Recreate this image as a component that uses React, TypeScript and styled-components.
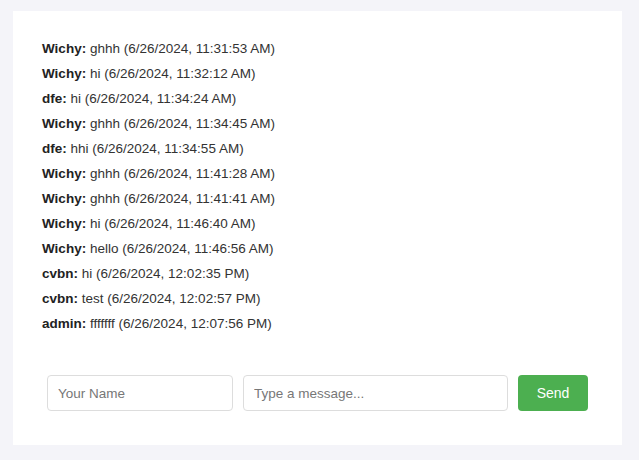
import styled, { createGlobalStyle } from 'styled-components';

const messages = [
  { user: 'Wichy', text: 'ghhh', time: '6/26/2024, 11:31:53 AM' },
  { user: 'Wichy', text: 'hi', time: '6/26/2024, 11:32:12 AM' },
  { user: 'dfe', text: 'hi', time: '6/26/2024, 11:34:24 AM' },
  { user: 'Wichy', text: 'ghhh', time: '6/26/2024, 11:34:45 AM' },
  { user: 'dfe', text: 'hhi', time: '6/26/2024, 11:34:55 AM' },
  { user: 'Wichy', text: 'ghhh', time: '6/26/2024, 11:41:28 AM' },
  { user: 'Wichy', text: 'ghhh', time: '6/26/2024, 11:41:41 AM' },
  { user: 'Wichy', text: 'hi', time: '6/26/2024, 11:46:40 AM' },
  { user: 'Wichy', text: 'hello', time: '6/26/2024, 11:46:56 AM' },
  { user: 'cvbn', text: 'hi', time: '6/26/2024, 12:02:35 PM' },
  { user: 'cvbn', text: 'test', time: '6/26/2024, 12:02:57 PM' },
  { user: 'admin', text: 'fffffff', time: '6/26/2024, 12:07:56 PM' },
];

const GlobalStyle = createGlobalStyle`
  html, body {
    margin: 0;
    padding: 0;
    background: #f4f4f9;
    font-family: "Liberation Sans", Arial, sans-serif;
  }
`;

const Page = styled.div`
  padding: 11px 17px 15px 13px;
`;

const ChatBox = styled.div`
  background: #fff;
  width: 609px;
  height: 434px;
  box-sizing: border-box;
  padding: 25px 34px 34px 29px;
  display: flex;
  flex-direction: column;
`;

const MessageList = styled.div`
  flex: 1;
  display: flex;
  flex-direction: column;
`;

const Message = styled.div`
  font-size: 13.5px;
  line-height: 25px;
  color: #333;
`;

const User = styled.strong`
  color: #222;
  font-weight: bold;
`;

const Form = styled.form`
  display: flex;
  gap: 10px;
  padding-left: 5px;
`;

const Input = styled.input<{ $width?: number }>`
  ${p => (p.$width ? `width: ${p.$width}px; flex: none;` : 'flex: 1; min-width: 0;')}
  height: 36px;
  box-sizing: border-box;
  padding: 0 10px;
  border: 1px solid #ddd;
  border-radius: 4px;
  font-family: "Liberation Sans", Arial, sans-serif;
  font-size: 13.5px;
  color: #333;
  outline: none;

  &::placeholder {
    color: #777;
  }
`;

const SendButton = styled.button`
  width: 70px;
  height: 36px;
  flex: none;
  border: none;
  border-radius: 4px;
  background: #4caf50;
  color: #fff;
  font-family: "Liberation Sans", Arial, sans-serif;
  font-size: 14px;
  cursor: pointer;
`;

export default function App() {
  return (
    <>
      <GlobalStyle />
      <Page>
        <ChatBox>
          <MessageList>
            {messages.map((m, i) => (
              <Message key={i}>
                <User>{m.user}:</User> {m.text} ({m.time})
              </Message>
            ))}
          </MessageList>
          <Form onSubmit={e => e.preventDefault()}>
            <Input $width={186} placeholder="Your Name" />
            <Input placeholder="Type a message..." />
            <SendButton type="submit">Send</SendButton>
          </Form>
        </ChatBox>
      </Page>
    </>
  );
}
